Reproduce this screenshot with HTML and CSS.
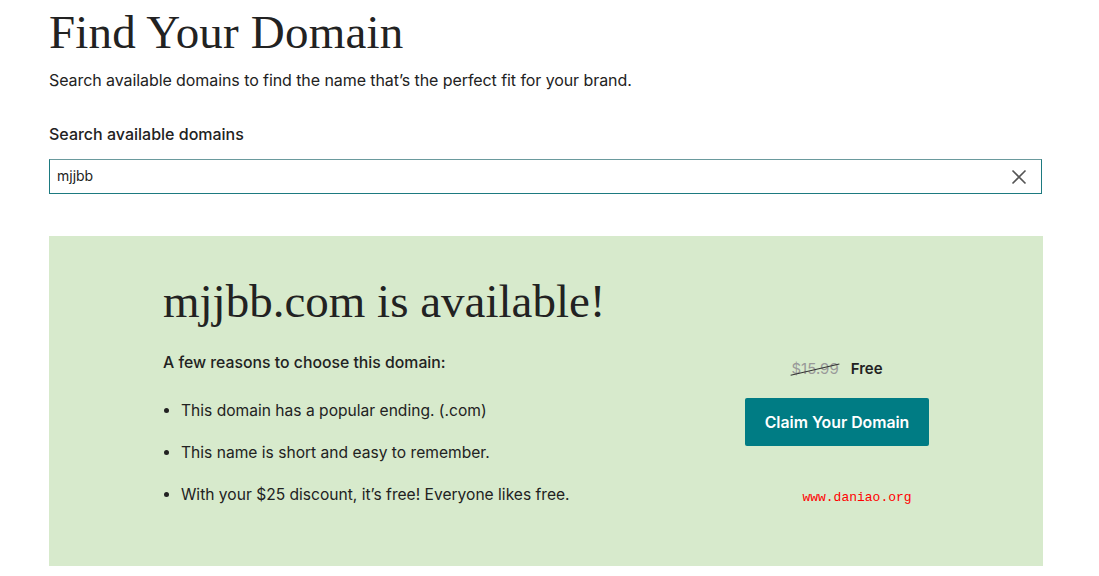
FILE: index.html
```html
<!DOCTYPE html>
<html lang="en">
<head>
<meta charset="utf-8">
<title>Find Your Domain</title>
<link rel="stylesheet" href="styles.css">
</head>
<body>
<main class="page">
  <h1 class="title">Find Your Domain</h1>
  <p class="intro">Search available domains to find the name that’s the perfect fit for your brand.</p>
  <label class="label" for="q">Search available domains</label>
  <div class="search">
    <input id="q" class="search-input" type="text" value="mjjbb">
    <span class="clear" aria-label="Clear">
      <svg width="16" height="16" viewBox="0 0 16 16"><path d="M1.5 1.5 L14.5 14.5 M14.5 1.5 L1.5 14.5" stroke="#555" stroke-width="1.6" fill="none"/></svg>
    </span>
  </div>
  <section class="result">
    <div class="result-main">
      <h2 class="result-title">mjjbb.com is available!</h2>
      <div class="result-body">
        <div class="reasons">
          <p class="reasons-head">A few reasons to choose this domain:</p>
          <ul class="reasons-list">
            <li>This domain has a popular ending. (.com)</li>
            <li>This name is short and easy to remember.</li>
            <li>With your $25 discount, it’s free! Everyone likes free.</li>
          </ul>
        </div>
        <div class="claim">
          <div class="price"><span class="old">$15.99</span><span class="new">Free</span></div>
          <button class="btn" type="button">Claim Your Domain</button>
          <div class="mark">www.daniao.org</div>
        </div>
      </div>
    </div>
  </section>
</main>
</body>
</html>
```
FILE: styles.css
```css
* { box-sizing: border-box; }
html, body { margin: 0; padding: 0; background: #fff; }
body {
  font-family: Inter, "Liberation Sans", Arial, sans-serif;
  color: #222;
  overflow: hidden;
}
.page {
  width: 994px;
  margin-left: 49px;
}
.title {
  font-family: "Liberation Serif", "Times New Roman", serif;
  font-weight: normal;
  font-size: 47px;
  line-height: 54px;
  margin: 5px 0 0 0;
  color: #222;
  letter-spacing: 0.2px;
}
.intro {
  font-size: 16px;
  line-height: 22px;
  margin: 10px 0 0 0;
  color: #222;
  letter-spacing: -0.08px;
}
.label {
  display: block;
  font-size: 16px;
  font-weight: 500;
  line-height: 20px;
  margin-top: 33px;
  color: #222;
}
.search {
  margin-top: 15px;
  position: relative;
  height: 35px;
  width: 993px;
  border: 1px solid #1d7a80;
  border-top-color: #6a9a9d;
  display: flex;
  align-items: center;
}
.search-input {
  border: 0;
  outline: 0;
  flex: 1;
  height: 100%;
  padding: 0 0 2px 7px;
  font-family: Inter, "Liberation Sans", Arial, sans-serif;
  font-size: 14px;
  color: #222;
  background: transparent;
}
.clear {
  width: 16px;
  height: 16px;
  margin-right: 14px;
  display: flex;
}
.result {
  margin-top: 42px;
  background: #d7eacc;
  height: 330px;
  padding: 38px 0 0 114px;
}
.result-title {
  font-family: "Liberation Serif", "Times New Roman", serif;
  font-weight: normal;
  font-size: 47px;
  line-height: 54px;
  margin: 0;
  color: #222;
}
.result-body {
  display: flex;
  margin-top: 25px;
}
.reasons { width: 582px; }
.reasons-head {
  font-size: 15.8px;
  font-weight: 500;
  line-height: 20px;
  margin: 0;
  color: #222;
}
.reasons-list {
  margin: 28px 0 0 0;
  padding-left: 18px;
  font-size: 15.6px;
  line-height: 20px;
  color: #222;
}
.reasons-list li { margin-bottom: 22px; }
.claim {
  width: 184px;
  display: flex;
  flex-direction: column;
  align-items: center;
}
.price {
  margin-top: 6px;
  font-size: 15px;
  line-height: 20px;
  display: flex;
  gap: 12px;
}
.old {
  color: #999;
  position: relative;
}
.old::after {
  content: "";
  position: absolute;
  left: -1px;
  right: -2px;
  top: 10px;
  height: 1px;
  background: #333;
  transform: rotate(-13deg);
}
.new { font-weight: 600; color: #222; }
.btn {
  margin-top: 19px;
  width: 184px;
  height: 48px;
  border: 0;
  border-radius: 2px;
  background: #007c84;
  color: #fff;
  font-family: Inter, "Liberation Sans", Arial, sans-serif;
  font-size: 15.8px;
  font-weight: 600;
}
.mark {
  margin-top: 44px;
  margin-left: 40px;
  font-family: "Liberation Mono", "Courier New", monospace;
  font-size: 13px;
  color: #f00;
}
```
